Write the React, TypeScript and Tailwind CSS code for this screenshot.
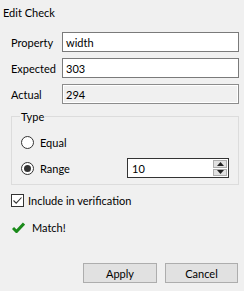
export default function App() {
  return (
    <div className="w-[244px] h-[291px] bg-[#f0f0f0] text-[11px] leading-none text-black font-['Lato',sans-serif] flex flex-col">
      {/* Title */}
      <div className="h-[24px] pl-[3px] flex items-center">Edit Check</div>

      {/* Fields */}
      <div className="mt-[8px] pl-[11px] pr-[5px] flex flex-col gap-[6px]">
        <div className="flex items-center h-[20px]">
          <span className="w-[51px] shrink-0">Property</span>
          <div className="flex-1 h-full bg-white border border-[#7a7a7a] pl-[3px] flex items-center">width</div>
        </div>
        <div className="flex items-center h-[20px]">
          <span className="w-[51px] shrink-0">Expected</span>
          <div className="flex-1 h-full bg-white border border-[#7a7a7a] pl-[3px] flex items-center">303</div>
        </div>
        <div className="flex items-center h-[20px]">
          <span className="w-[51px] shrink-0">Actual</span>
          <div className="flex-1 h-full bg-[#f0f0f0] border border-[#8c8c8c] shadow-[inset_0_0_0_1px_#ffffff] pl-[3px] flex items-center">
            294
          </div>
        </div>
      </div>

      {/* Type group */}
      <div className="relative mt-[12px] ml-[11px] mr-[5px] h-[69px] border border-[#dcdcdc] pl-[9px] pr-[9px] flex flex-col">
        <span className="absolute -top-[6px] left-[8px] bg-[#f0f0f0] px-[1px]">Type</span>
        <div className="mt-[19px] h-[13px] flex items-center gap-[6px]">
          <div className="w-[13px] h-[13px] rounded-full border border-[#333] bg-white" />
          <span>Equal</span>
        </div>
        <div className="mt-[9px] h-[20px] flex items-center">
          <div className="w-[13px] h-[13px] rounded-full border border-[#333] bg-white flex items-center justify-center">
            <div className="w-[7px] h-[7px] rounded-full bg-[#333]" />
          </div>
          <span className="ml-[6px]">Range</span>
          <div className="ml-auto w-[102px] h-[20px] bg-white border border-[#333] flex items-center">
            <span className="pl-[4px] flex-1">10</span>
            <div className="w-[16px] h-full flex flex-col p-[1px] gap-[1px]">
              <div className="flex-1 bg-[#e1e1e1] border border-[#adadad] flex items-center justify-center">
                <svg width="7" height="4" viewBox="0 0 7 4"><path d="M3.5 0L7 4H0z" fill="#222" /></svg>
              </div>
              <div className="flex-1 bg-[#e1e1e1] border border-[#adadad] flex items-center justify-center">
                <svg width="7" height="4" viewBox="0 0 7 4"><path d="M0 0h7L3.5 4z" fill="#222" /></svg>
              </div>
            </div>
          </div>
        </div>
      </div>

      {/* Checkbox */}
      <div className="mt-[9px] ml-[11px] h-[13px] flex items-center gap-[4px]">
        <div className="w-[13px] h-[13px] border border-[#333] bg-white flex items-center justify-center">
          <svg width="11" height="11" viewBox="0 0 11 11">
            <path d="M1.5 5.5L4.2 8.2L9.5 2.5" fill="none" stroke="#333" strokeWidth="1.1" />
          </svg>
        </div>
        <span>Include in verification</span>
      </div>

      {/* Match */}
      <div className="mt-[13px] ml-[12px] h-[14px] flex items-center gap-[7px]">
        <svg width="13" height="11" viewBox="0 0 13 11">
          <path d="M1 6L4.5 9.5L12 1.5" fill="none" stroke="#1a8a1a" strokeWidth="3" />
        </svg>
        <span>Match!</span>
      </div>

      {/* Buttons */}
      <div className="mt-auto mb-[8px] pr-[6px] flex justify-end gap-[8px]">
        <button className="w-[74px] h-[20px] bg-[#e1e1e1] border border-[#adadad] flex items-center justify-center">Apply</button>
        <button className="w-[73px] h-[20px] bg-[#e1e1e1] border border-[#adadad] flex items-center justify-center">Cancel</button>
      </div>
    </div>
  );
}
